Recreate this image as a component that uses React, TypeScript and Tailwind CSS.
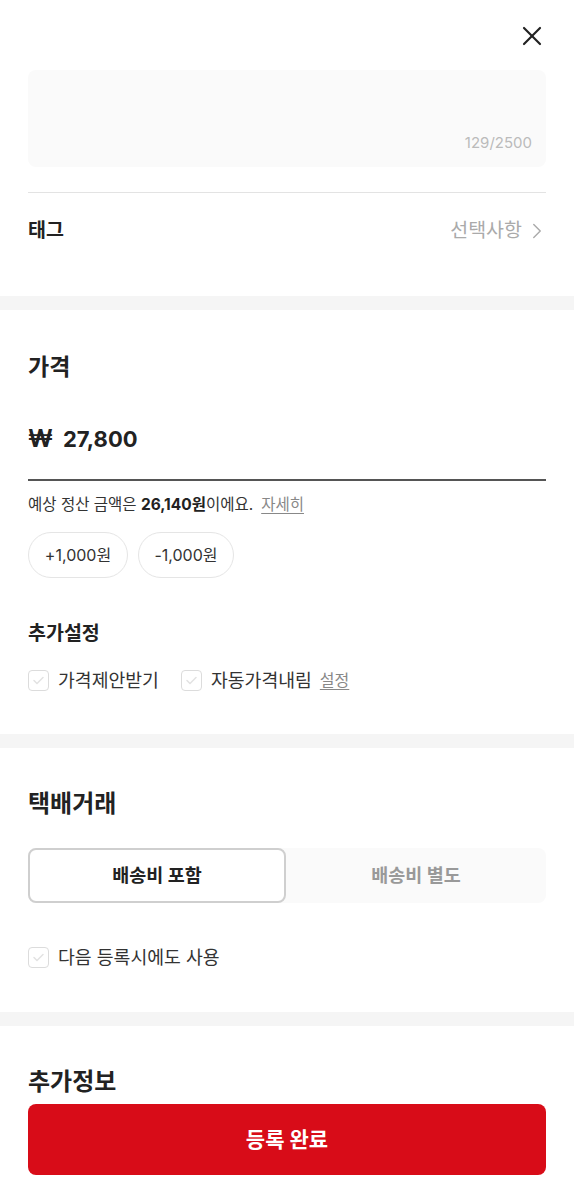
import { X, ChevronRight } from "lucide-react";

function CheckBox({ label, extra }: { label: string; extra?: string }) {
    return (
        <div className="flex items-center">
            <span className="w-[21px] h-[21px] rounded-[4px] border border-[#dcdcdc] flex items-center justify-center">
                <svg width="11" height="9" viewBox="0 0 11 9" fill="none">
                    <path d="M1 4.5L4 7.5L10 1.5" stroke="#e2e2e2" strokeWidth="1.5" strokeLinecap="round" strokeLinejoin="round" />
                </svg>
            </span>
            <span className="ml-[9px] text-[18.3px] text-[#333] leading-[26px]">{label}</span>
            {extra && (
                <span className="ml-[8px] text-[16px] text-[#888] underline underline-offset-[3px] leading-[26px]">{extra}</span>
            )}
        </div>
    );
}

function Band() {
    return <div className="h-[14px] bg-[#f5f5f5]" />;
}

export default function App() {
    return (
        <div
            className="relative w-[574px] h-[1200px] overflow-hidden bg-white text-[#222]"
            style={{ fontFamily: 'Inter, "Noto Sans CJK KR", "Noto Sans", sans-serif' }}
        >
            {/* header */}
            <div className="h-[70px] flex justify-end items-start pt-[20px] pr-[26px]">
                <X size={32} strokeWidth={1.6} className="text-[#222]" />
            </div>

            <div className="px-[28px]">
                <div className="h-[97px] rounded-lg bg-[#fafafa] flex items-end justify-end pb-[13px] pr-[14px]">
                    <span className="text-[15px] text-[#bbb] leading-[22px]">129/2500</span>
                </div>
                <div className="mt-[25px] h-px bg-[#e3e3e3]" />
                <div className="h-[76px] flex items-center justify-between">
                    <span className="text-[19.5px] font-bold">태그</span>
                    <span className="flex items-center text-[19.5px] text-[#aaa]">
                        선택사항
                        <ChevronRight size={26} strokeWidth={1.3} className="ml-[2px] -mr-[4px] text-[#aaa]" />
                    </span>
                </div>
                <div className="h-[27px]" />
            </div>

            <Band />

            {/* price */}
            <div className="px-[28px] pt-[42px] pb-[41px]">
                <h2 className="text-[23px] font-bold leading-[30px]">가격</h2>
                <div className="mt-[42px] h-[57px] border-b-2 border-[#555]">
                    <div className="flex items-center text-[22px] font-bold leading-[30px]">
                        <span className="text-[24px] mr-[10px]">₩</span>
                        <span>27,800</span>
                    </div>
                </div>
                <p className="mt-[13px] text-[15.5px] leading-[22px] text-[#333]">
                    예상 정산 금액은 <b className="font-bold text-[#222]">26,140원</b>이에요.
                    <span className="ml-[8px] text-[#888] underline underline-offset-[3px]">자세히</span>
                </p>
                <div className="mt-[16px] flex gap-[10px]">
                    <button className="h-[46px] w-[100px] rounded-full border border-[#e5e5e5] text-[16px] text-[#333]">+1,000원</button>
                    <button className="h-[46px] w-[96px] rounded-full border border-[#e5e5e5] text-[16px] text-[#333]">-1,000원</button>
                </div>
                <h3 className="mt-[42px] text-[19.5px] font-bold leading-[26px]">추가설정</h3>
                <div className="mt-[21px] flex items-center gap-[22px]">
                    <CheckBox label="가격제안받기" />
                    <CheckBox label="자동가격내림" extra="설정" />
                </div>
            </div>

            <Band />

            {/* delivery */}
            <div className="px-[28px] pt-[41px] pb-[42px]">
                <h2 className="text-[24px] font-bold leading-[30px]">택배거래</h2>
                <div className="mt-[29px] h-[55px] flex rounded-lg bg-[#fafafa]">
                    <button className="w-[258px] h-full rounded-lg border-2 border-[#cfcfcf] bg-white text-[18.5px] font-bold text-[#222]">
                        배송비 포함
                    </button>
                    <button className="flex-1 h-full text-[18.5px] font-bold text-[#999]">배송비 별도</button>
                </div>
                <div className="mt-[41px]">
                    <CheckBox label="다음 등록시에도 사용" />
                </div>
            </div>

            <Band />

            <div className="px-[28px] pt-[41px]">
                <h2 className="text-[24px] font-bold leading-[30px]">추가정보</h2>
            </div>

            {/* sticky submit */}
            <div className="absolute bottom-0 left-0 right-0 px-[28px] pb-[25px]">
                <button className="w-full h-[71px] rounded-lg bg-[#d80c18] text-white text-[21px] font-bold">
                    등록 완료
                </button>
            </div>
        </div>
    );
}
